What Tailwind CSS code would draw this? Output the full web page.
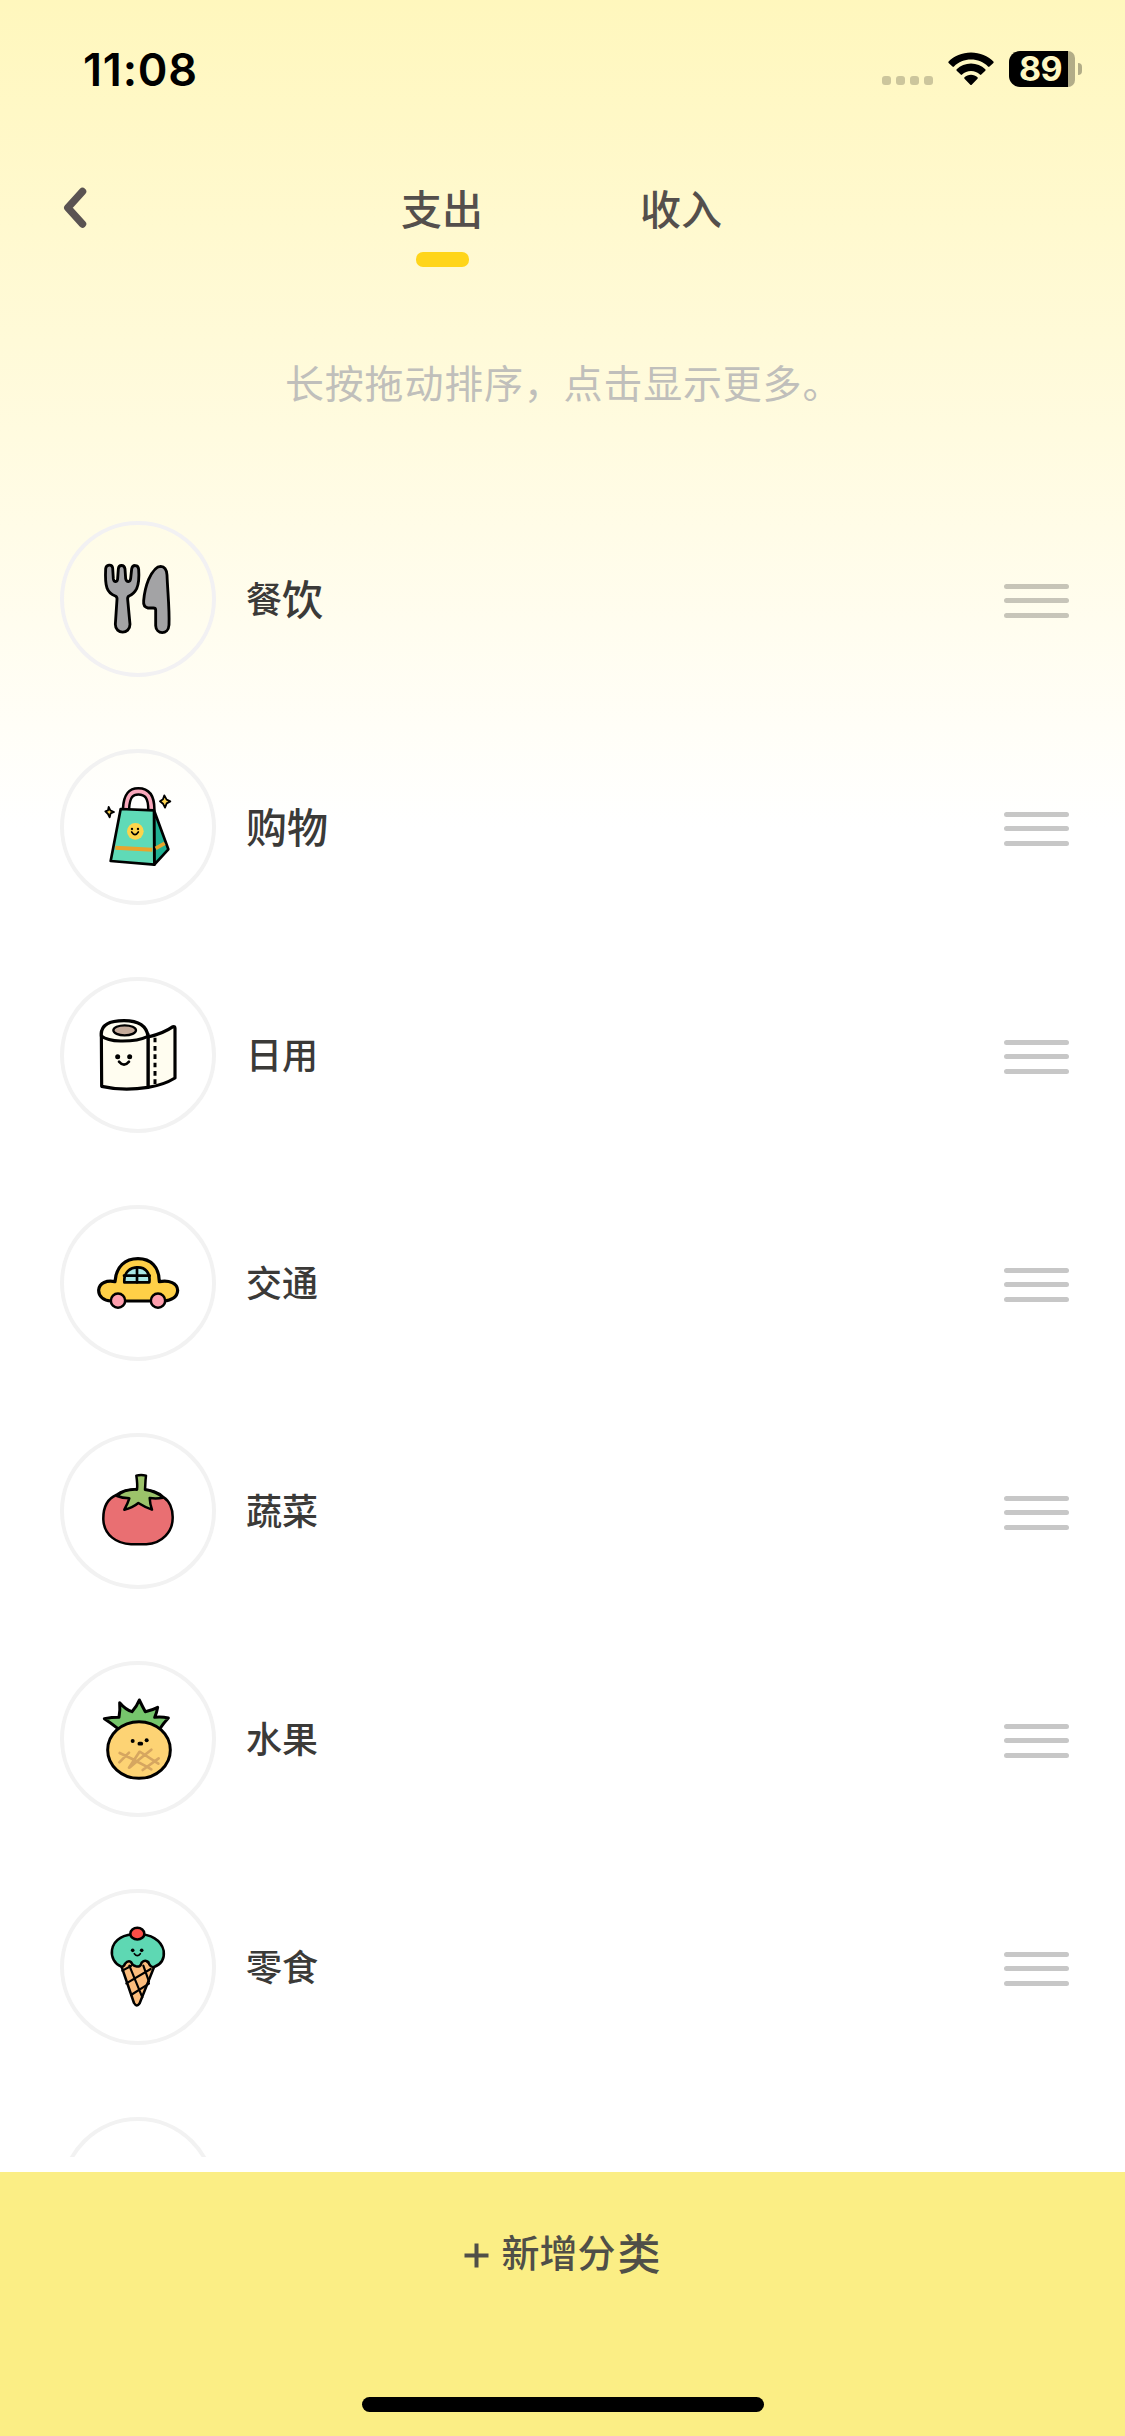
<!DOCTYPE html>
<html lang="zh-CN">
<head>
<meta charset="utf-8">
<title>分类管理</title>
<script src="https://cdn.jsdelivr.net/npm/@tailwindcss/browser@4"></script>
</head>
<body class="bg-white">
<div class="flex h-[2436px] w-[1125px] flex-col overflow-hidden bg-linear-to-b from-[#fff7bd] from-0% via-[#fffad8] via-[14%] to-white to-[34%] font-['Noto_Sans_CJK_SC',sans-serif]">

  <!-- status bar -->
  <header class="flex h-[138px] shrink-0 items-center justify-between pr-[43px] pl-[83px]">
    <div class="font-['Inter',sans-serif] text-[45px] leading-none font-semibold tracking-[0.8px] text-black">11:08</div>
    <div class="flex items-center">
      <div class="mt-[23px] mr-[15px] flex gap-[5px]">
        <i class="size-[9px] rounded-[3px] bg-black/20"></i><i class="size-[9px] rounded-[3px] bg-black/20"></i><i class="size-[9px] rounded-[3px] bg-black/20"></i><i class="size-[9px] rounded-[3px] bg-black/20"></i>
      </div>
      <svg class="mr-[15px] h-[34px] w-[46px]" viewBox="0 0 46 34">
        <path d="M23 0.5C32 .5 40 4 45.4 9.400Q46 10.200 45.400 10.900L41.500 14.600Q40.800 15.200 40 14.500C35.500 10.200 29.500 7.600 23 7.600S10.500 10.200 6 14.500Q5.200 15.200 4.500 14.600L.6 10.900Q0 10.200 .6 9.400C6 4 14 .5 23 .5Z"/>
        <path d="M23 11.500C28.500 11.500 33.500 13.700 37.300 17.300Q38 18 37.300 18.700L33.300 22.600Q32.600 23.200 31.900 22.600C29.500 20.400 26.500 19 23 19S16.500 20.400 14.100 22.600Q13.400 23.200 12.700 22.600L8.700 18.700Q8 18 8.700 17.300C12.500 13.700 17.500 11.500 23 11.500Z"/>
        <path d="M23 22.800C25.500 22.800 27.800 23.800 29.500 25.300Q30.200 26 29.500 26.700L23.700 32.700Q23 33.400 22.300 32.700L16.500 26.700Q15.800 26 16.500 25.300C18.200 23.800 20.500 22.800 23 22.800Z"/>
      </svg>
      <div class="flex h-9 w-[66px]">
        <div class="flex w-[59px] items-center justify-center rounded-l-[11px] bg-black pl-[4px] font-['Inter',sans-serif] text-[34px] leading-[36px] font-bold tracking-[-0.5px] text-[#fff7c2]">89</div>
        <div class="w-[7px] rounded-r-[9px] bg-black/30"></div>
      </div>
      <div class="ml-[3px] h-3 w-1 rounded-r-full bg-black/30"></div>
    </div>
  </header>

  <!-- tabs -->
  <nav class="flex h-[162px] shrink-0 items-start pl-[63px]">
    <svg class="mt-[49px] h-[42px] w-6" viewBox="0 0 24 42" fill="none" stroke="#5a5352" stroke-width="7.500" stroke-linecap="round" stroke-linejoin="round"><path d="M19.500 4.500L4.800 20.800L19.500 37"/></svg>
    <div class="ml-[314px] flex w-[82px] flex-col items-center text-[41px] leading-[60px] font-medium text-[#544f4c]">
      <span class="mt-[39px]">支出</span>
      <span class="mt-[15px] h-[15px] w-[53px] rounded-[7px] bg-[#ffd51a]"></span>
    </div>
    <div class="mt-[39px] ml-[157px] text-[41px] leading-[60px] font-medium text-[#544f4c]">收入</div>
  </nav>

  <p class="h-[221px] shrink-0 pt-[51px] pl-[285px] text-[39px] leading-[60px] tracking-[0.8px] whitespace-nowrap text-[#c0bfbb]">长按拖动排序，点击显示更多。</p>

  <!-- category list -->
  <main class="flex h-[1636px] shrink-0 flex-col gap-[72px] overflow-hidden pr-14 pl-[60px]">

    <div class="flex h-[156px] shrink-0 items-center">
      <div class="size-[156px] rounded-full border-4 border-[#f2f1f3]">
        <svg class="size-full" viewBox="42 45 444 444" fill="#a3a3a5" stroke="#000" stroke-width="8.500" stroke-linejoin="round" stroke-linecap="round">
          <path d="M167 176C168 163 186 161 188 174L190 206Q191 215 197 215Q203 214 203 205L205 177C206 163 223 163 225 177L227 206Q229 215 235 215Q241 214 242 205L245 177C247 163 265 163 266 178C268 205 266 222 260 236Q252 252 237 258Q232 261 233 268L240 343C240 374 196 374 196 343L201 268Q202 261 196 258Q177 251 171 234C165 218 166 196 167 176Z"/>
          <path d="M332 169C345 170 350 178 351 195C353 245 359 300 357 345C355 376 318 374 317 347L317 300Q317 294 310 294L294 294Q279 291 281 272C283 249 287 230 296 208C307 184 318 169 332 169Z"/>
        </svg>
      </div>
      <div class="flex flex-1 items-center pb-1 pl-[30px] text-[36px] leading-[60px] font-medium text-[#3b3a38]">餐<span class="text-[41px]">饮</span></div>
      <div class="mt-[3px] flex w-[65px] flex-col gap-[9.500px]"><i class="h-[5px] rounded-full bg-black/22"></i><i class="h-[5px] rounded-full bg-black/22"></i><i class="h-[5px] rounded-full bg-black/22"></i></div>
    </div>

    <div class="flex h-[156px] shrink-0 items-center">
      <div class="size-[156px] rounded-full border-4 border-[#f2f2f2]">
        <svg class="size-full" viewBox="42 39 444 444" stroke="#000" stroke-width="8" stroke-linejoin="round" stroke-linecap="round">
          <path d="M228 206C230 166 243 154 265 154C292 154 304 171 304 208" fill="none" stroke-width="26"/>
          <path d="M228 208C230 166 243 154 265 154C292 154 304 171 304 210" fill="none" stroke="#f9a7bb" stroke-width="11" stroke-linecap="butt"/>
          <path d="M312 211L355 328L313 374Z" fill="#1fb193"/>
          <path d="M212 207L312 211L313 374L182 363Z" fill="#5fdab7"/>
          <path d="M196 323L307 329" stroke="#e9a42c" stroke-width="12" stroke-linecap="butt"/>
          <path d="M317 325L344 310" stroke="#e9a42c" stroke-width="11" stroke-linecap="butt"/>
          <circle cx="256" cy="274" r="25" fill="#fcd44b" stroke="none"/>
          <path d="M245 276Q255 292 265 276" fill="none" stroke-width="5"/>
          <g fill="#000" stroke="none"><circle cx="246" cy="267" r="3.500"/><circle cx="264" cy="267" r="3.500"/></g>
          <path d="M343 166L350 179L361 184L350 190L345 203L339 191L330 184L339 178Z" fill="#ffd653" stroke-width="5.500"/>
          <path d="M176 201L181 211L192 216L182 220L179 232L174 222L166 214L174 211Z" fill="#ffd653" stroke-width="5.500"/>
        </svg>
      </div>
      <div class="flex-1 pb-1 pl-[30px] text-[41px] leading-[60px] font-medium text-[#3b3a38]">购物</div>
      <div class="mt-[3px] flex w-[65px] flex-col gap-[9.500px]"><i class="h-[5px] rounded-full bg-black/22"></i><i class="h-[5px] rounded-full bg-black/22"></i><i class="h-[5px] rounded-full bg-black/22"></i></div>
    </div>

    <div class="flex h-[156px] shrink-0 items-center">
      <div class="size-[156px] rounded-full border-4 border-[#f2f2f2]">
        <svg class="size-full" viewBox="42 48 444 444" fill="#fffdf0" stroke="#000" stroke-width="9.500" stroke-linejoin="round" stroke-linecap="round">
          <path d="M294 216Q339 206 369 185Q375 183 375 190L375 339Q341 360 294 367Z"/>
          <path d="M154 200L155 364Q220 379 294 367L294 207Z"/>
          <path d="M154 206C155 178 184 167 222 167C264 167 290 183 294 214Q262 229 212 228Q171 227 154 213Z"/>
          <ellipse cx="224" cy="196" rx="34" ry="15" fill="#c4aa99" stroke-width="7"/>
          <path d="M315 218V364" fill="none" stroke-width="9" stroke-dasharray="14 11" stroke-linecap="butt"/>
          <path d="M207 290Q222 308 237 290" fill="none" stroke-width="8"/>
          <g fill="#000" stroke="none"><circle cx="203" cy="275" r="7.500"/><circle cx="239" cy="275" r="7.500"/></g>
        </svg>
      </div>
      <div class="flex-1 pb-1 pl-[30px] text-[36px] leading-[60px] font-medium text-[#3b3a38]">日用</div>
      <div class="mt-[3px] flex w-[65px] flex-col gap-[9.500px]"><i class="h-[5px] rounded-full bg-black/22"></i><i class="h-[5px] rounded-full bg-black/22"></i><i class="h-[5px] rounded-full bg-black/22"></i></div>
    </div>

    <div class="flex h-[156px] shrink-0 items-center">
      <div class="size-[156px] rounded-full border-4 border-[#f2f2f2]">
        <svg class="size-full" viewBox="42 42 444 444" fill="#ffd047" stroke="#000" stroke-width="9.500" stroke-linejoin="round" stroke-linecap="round">
          <path d="M195 260C198 213 226 191 264 191C302 191 328 216 328 260C358 255 382 264 383 286C382 306 364 317 342 318H183C162 317 145 305 146 285C148 263 171 255 195 260Z"/>
          <path d="M223 262C221 232 239 217 264 217C286 217 302 234 298 262Z" fill="#a8e7e6" stroke-width="8"/>
          <path d="M261 217V262M222 242H299" fill="none" stroke-width="8"/>
          <circle cx="204" cy="317" r="21.500" fill="#ff9fae" stroke-width="7.500"/>
          <circle cx="324" cy="317" r="21.500" fill="#ff9fae" stroke-width="7.500"/>
        </svg>
      </div>
      <div class="flex-1 pb-1 pl-[30px] text-[36px] leading-[60px] font-medium text-[#3b3a38]">交通</div>
      <div class="mt-[3px] flex w-[65px] flex-col gap-[9.500px]"><i class="h-[5px] rounded-full bg-black/22"></i><i class="h-[5px] rounded-full bg-black/22"></i><i class="h-[5px] rounded-full bg-black/22"></i></div>
    </div>

    <div class="flex h-[156px] shrink-0 items-center">
      <div class="size-[156px] rounded-full border-4 border-[#f2f2f2]">
        <svg class="size-full" viewBox="42 51 444 444" stroke="#000" stroke-width="7.500" stroke-linejoin="round" stroke-linecap="round">
          <path d="M199 225C171 237 159 262 160 299C162 346 201 371 243 373H289C337 370 368 334 368 295C369 265 357 242 341 232C310 200 230 200 199 225Z" fill="#e96f72"/>
          <path d="M201 228C217 213 240 208 261 209C263 195 261 181 259 167Q273 163 288 167C286 182 286 196 285 209C307 212 325 220 339 233Q320 237 299 234Q300 253 306 269Q284 261 265 249Q247 264 223 269Q233 251 238 235Q216 234 201 228Z" fill="#9cc36a"/>
        </svg>
      </div>
      <div class="flex-1 pb-1 pl-[30px] text-[36px] leading-[60px] font-medium text-[#3b3a38]">蔬菜</div>
      <div class="mt-[3px] flex w-[65px] flex-col gap-[9.500px]"><i class="h-[5px] rounded-full bg-black/22"></i><i class="h-[5px] rounded-full bg-black/22"></i><i class="h-[5px] rounded-full bg-black/22"></i></div>
    </div>

    <div class="flex h-[156px] shrink-0 items-center">
      <div class="size-[156px] rounded-full border-4 border-[#f2f2f2]">
        <svg class="size-full" viewBox="42 45 444 444" stroke="#000" stroke-width="9" stroke-linejoin="round" stroke-linecap="round">
          <path d="M204 236Q182 218 163 206Q185 202 207 202Q211 181 209 158Q227 179 246 185Q261 168 268 150Q276 167 286 185Q306 181 323 172Q320 190 314 202Q336 200 355 204Q340 220 329 237Z" fill="#76c66c"/>
          <ellipse cx="267" cy="300" rx="94" ry="85" fill="#fdd374"/>
          <path d="M209 309L247 327L290 350L304 358M237 308L208 337M268 306L237 353M271 306L325 341M304 299L268 328L240 352M326 325L278 360" fill="none" stroke="#d6a660" stroke-width="8"/>
          <path d="M268 281H274" fill="none" stroke-width="11"/>
          <g fill="#000" stroke="none"><circle cx="248" cy="273" r="6"/><circle cx="290" cy="271" r="6"/></g>
        </svg>
      </div>
      <div class="flex-1 pb-1 pl-[30px] text-[36px] leading-[60px] font-medium text-[#3b3a38]">水果</div>
      <div class="mt-[3px] flex w-[65px] flex-col gap-[9.500px]"><i class="h-[5px] rounded-full bg-black/22"></i><i class="h-[5px] rounded-full bg-black/22"></i><i class="h-[5px] rounded-full bg-black/22"></i></div>
    </div>

    <div class="flex h-[156px] shrink-0 items-center">
      <div class="size-[156px] rounded-full border-4 border-[#f2f2f2]">
        <svg class="size-full" viewBox="42 39 444 444" stroke="#000" stroke-width="7.500" stroke-linejoin="round" stroke-linecap="round">
          <path d="M214 258L252 369Q260 383 269 370L312 262L280 235H235Z" fill="#fbbc7c"/>
          <path d="M238 257L277 352M280 257L297 305M217 272L243 258M229 310L302 267M243 345L297 311" fill="none" stroke-width="6.500"/>
          <path d="M214 260C193 252 183 231 186 210C191 177 223 162 262 162C302 162 334 180 341 212C344 236 335 253 312 261Q300 262 295 246Q285 238 275 248Q271 263 258 259Q248 258 243 246Q234 240 225 251Q221 261 214 260Z" fill="#5ed8b3"/>
          <ellipse cx="262" cy="161" rx="21" ry="17.500" fill="#fa4d47"/>
          <path d="M253 221Q262 233 271 221" fill="none" stroke-width="5"/>
          <g fill="#000" stroke="none"><circle cx="248" cy="211" r="5.500"/><circle cx="275" cy="211" r="5.500"/></g>
        </svg>
      </div>
      <div class="flex-1 pb-1 pl-[30px] text-[36px] leading-[60px] font-medium text-[#3b3a38]">零食</div>
      <div class="mt-[3px] flex w-[65px] flex-col gap-[9.500px]"><i class="h-[5px] rounded-full bg-black/22"></i><i class="h-[5px] rounded-full bg-black/22"></i><i class="h-[5px] rounded-full bg-black/22"></i></div>
    </div>

    <div class="size-[156px] shrink-0 rounded-full border-4 border-[#f2f2f2]"></div>
  </main>

  <!-- add category -->
  <footer class="mt-[15px] flex h-[264px] shrink-0 flex-col items-center bg-[#fbee85]">
    <button class="mt-[49px] flex h-[60px] items-center text-[38px] leading-[60px] font-medium text-[#504f48]"><svg class="mt-2 mr-3 size-[25px]" viewBox="0 0 25 25" stroke="currentColor" stroke-width="4"><path d="M12.500 0.500V24.500M0.500 12.500H24.500"/></svg>新增分<span class="ml-0.5 text-[43px]">类</span></button>
    <div class="mt-[116px] h-[15px] w-[402px] rounded-full bg-black"></div>
  </footer>
</div>
</body>
</html>
